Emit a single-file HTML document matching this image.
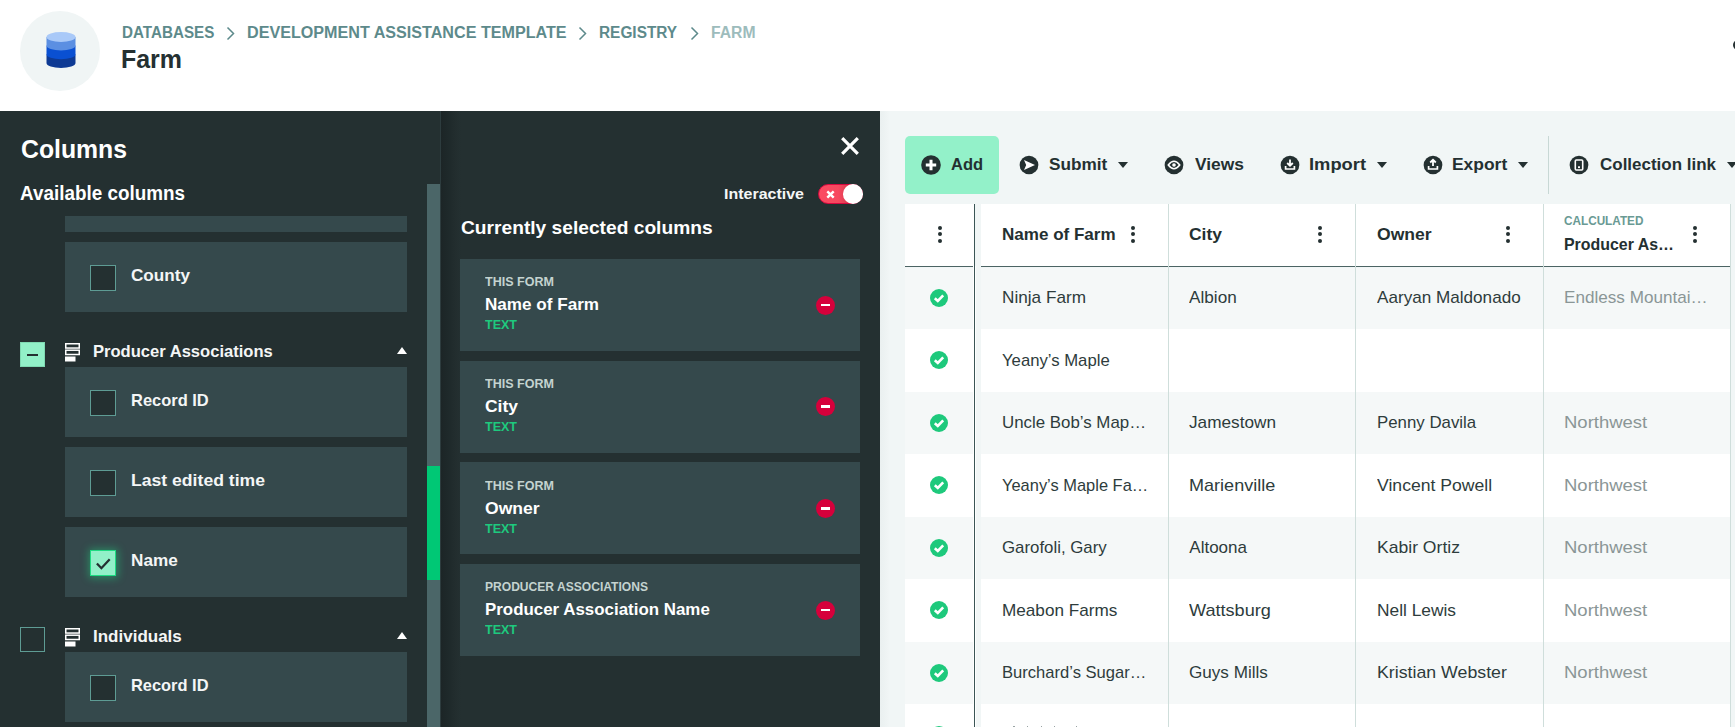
<!DOCTYPE html>
<html><head><meta charset="utf-8">
<style>
*{margin:0;padding:0;box-sizing:border-box}
html,body{width:1735px;height:727px;overflow:hidden;background:#fff;font-family:"Liberation Sans",sans-serif}
.a{position:absolute}
.t{position:absolute;white-space:nowrap;line-height:1;transform-origin:0 50%}
.card{position:absolute;left:65px;width:342px;height:70px;background:#35494c}
.cb{position:absolute;width:26px;height:26px;border:1.2px solid #5e9c94;background:#243031}
.tri{position:absolute;width:0;height:0;border-left:5.5px solid transparent;border-right:5.5px solid transparent;border-bottom:7.5px solid #fff}
.scard{position:absolute;left:460px;width:400px;height:92px;background:#35494c}
.rm{position:absolute;width:19px;height:19px;border-radius:50%;background:#d6003b}
.rm:after{content:"";position:absolute;left:5px;top:8.2px;width:9px;height:2.6px;background:#fff}
.ico{position:absolute;width:19.5px;height:19.5px}
.dd{position:absolute;width:0;height:0;border-left:5px solid transparent;border-right:5px solid transparent;border-top:6px solid #243031}
.dots{position:absolute;width:4px;height:17px}
.dots i{position:absolute;left:0;width:4px;height:4px;border-radius:50%;background:#243031}
.chk{position:absolute;width:18px;height:18px}
.row{position:absolute;height:62.4px}
</style></head><body>

<div class="a" style="left:0;top:0;width:1735px;height:111px;background:#fff"></div>
<div class="a" style="left:20px;top:11px;width:80px;height:80px;border-radius:50%;background:#f0f5f5"></div>
<svg class="a" style="left:45.5px;top:31px" width="30" height="38" viewBox="0 0 30 38">
<path d="M0.5 23.3 L0.5 32 A14.5 5 0 0 0 29.5 32 L29.5 23.3 Z" fill="#0e3a94"/>
<path d="M0.5 14.4 L0.5 23.3 A14.5 5 0 0 0 29.5 23.3 L29.5 14.4 Z" fill="#0a50d2"/>
<path d="M0.5 6 L0.5 14.4 A14.5 5 0 0 0 29.5 14.4 L29.5 6 Z" fill="#5b8fe2"/>
<ellipse cx="15" cy="6" rx="14.5" ry="5" fill="#a9c9f8"/>
</svg>
<div class="t" style="left:122.00px;top:25.18px;font-size:16.8px;color:#5d8a8b;font-weight:bold;transform:scaleX(0.9054);">DATABASES</div>
<div class="t" style="left:246.70px;top:25.18px;font-size:16.8px;color:#5d8a8b;font-weight:bold;transform:scaleX(0.9612);">DEVELOPMENT ASSISTANCE TEMPLATE</div>
<div class="t" style="left:599.30px;top:25.18px;font-size:16.8px;color:#5d8a8b;font-weight:bold;transform:scaleX(0.9172);">REGISTRY</div>
<div class="t" style="left:710.70px;top:25.18px;font-size:16.8px;color:#9dbcbc;font-weight:bold;transform:scaleX(0.9370);">FARM</div>
<svg class="a" style="left:226px;top:26px" width="10" height="15"><path d="M1.5 1.5 L7.5 7.5 L1.5 13.5" stroke="#5d8a8b" stroke-width="1.5" fill="none"/></svg>
<svg class="a" style="left:578px;top:26px" width="10" height="15"><path d="M1.5 1.5 L7.5 7.5 L1.5 13.5" stroke="#5d8a8b" stroke-width="1.5" fill="none"/></svg>
<svg class="a" style="left:690px;top:26px" width="10" height="15"><path d="M1.5 1.5 L7.5 7.5 L1.5 13.5" stroke="#5d8a8b" stroke-width="1.5" fill="none"/></svg>
<div class="t" style="left:121.00px;top:46.54px;font-size:25px;color:#243031;font-weight:bold;transform:scaleX(0.9978);">Farm</div>
<div class="a" style="left:1733px;top:40px;width:10px;height:10px;border-radius:50%;background:#243031"></div>
<div class="a" style="left:0;top:111px;width:441px;height:616px;background:#243031"></div>
<div class="t" style="left:20.80px;top:137.01px;font-size:25.5px;color:#fff;font-weight:bold;transform:scaleX(0.9717);">Columns</div>
<div class="t" style="left:20.00px;top:184.49px;font-size:19.5px;color:#fff;font-weight:bold;transform:scaleX(0.9677);">Available columns</div>
<div class="a" style="left:427px;top:184px;width:13px;height:543px;background:#4b6668"></div>
<div class="a" style="left:427px;top:466px;width:13px;height:114px;background:#00c875"></div>
<div class="a" style="left:440px;top:111px;width:1px;height:616px;background:#2d3c3e"></div>
<div class="card" style="top:216px;height:16px"></div>
<div class="card" style="top:242px"></div>
<div class="cb" style="left:90px;top:265px"></div>
<div class="t" style="left:130.70px;top:266.61px;font-size:17px;color:#f4f6f6;font-weight:bold;transform:scaleX(1.0077);">County</div>
<div class="cb" style="left:20px;top:342px;width:25px;height:25px;background:#92f0c8;border-color:#7fd9b2"></div>
<div class="a" style="left:27px;top:353.5px;width:11px;height:2.2px;background:#243031"></div>
<svg class="a" style="left:65px;top:343px" width="16" height="19" viewBox="0 0 16 19">
<rect x="0.75" y="0.75" width="13.5" height="4.3" fill="none" stroke="#fff" stroke-width="1.5"/>
<rect x="0.75" y="7.2" width="13.5" height="4.3" fill="none" stroke="#fff" stroke-width="1.5"/>
<rect x="0" y="13.5" width="10.5" height="5" fill="#fff"/>
</svg>
<div class="t" style="left:93.40px;top:342.61px;font-size:17px;color:#f4f6f6;font-weight:bold;transform:scaleX(0.9743);">Producer Associations</div>
<div class="tri" style="left:396.5px;top:347px"></div>
<div class="card" style="top:367px"></div>
<div class="cb" style="left:90px;top:390px"></div>
<div class="t" style="left:130.70px;top:391.61px;font-size:17px;color:#f4f6f6;font-weight:bold;transform:scaleX(0.9677);">Record ID</div>
<div class="card" style="top:447px"></div>
<div class="cb" style="left:90px;top:470px"></div>
<div class="t" style="left:130.70px;top:471.61px;font-size:17px;color:#f4f6f6;font-weight:bold;transform:scaleX(1.0354);">Last edited time</div>
<div class="card" style="top:527px"></div>
<div class="cb" style="left:90px;top:550px;background:#92f0c8;border-color:#1edc82;box-shadow:0 0 8px 1.5px rgba(30,220,130,.45)"></div>
<svg class="a" style="left:90px;top:550px" width="26" height="26"><path d="M6.9 13.5 L11.4 18.2 L19.7 9.3" stroke="#243031" stroke-width="2.3" fill="none"/></svg>
<div class="t" style="left:130.70px;top:551.61px;font-size:17px;color:#f4f6f6;font-weight:bold;transform:scaleX(1.0086);">Name</div>
<div class="cb" style="left:20px;top:627px;width:25px;height:25px"></div>
<svg class="a" style="left:65px;top:628px" width="16" height="19" viewBox="0 0 16 19">
<rect x="0.75" y="0.75" width="13.5" height="4.3" fill="none" stroke="#fff" stroke-width="1.5"/>
<rect x="0.75" y="7.2" width="13.5" height="4.3" fill="none" stroke="#fff" stroke-width="1.5"/>
<rect x="0" y="13.5" width="10.5" height="5" fill="#fff"/>
</svg>
<div class="t" style="left:93.40px;top:627.61px;font-size:17px;color:#f4f6f6;font-weight:bold;transform:scaleX(1.0001);">Individuals</div>
<div class="tri" style="left:396.5px;top:632px"></div>
<div class="card" style="top:652px"></div>
<div class="cb" style="left:90px;top:675px"></div>
<div class="t" style="left:130.70px;top:676.61px;font-size:17px;color:#f4f6f6;font-weight:bold;transform:scaleX(0.9652);">Record ID</div>
<div class="a" style="left:441px;top:111px;width:439px;height:616px;background:#243031"></div>
<div class="a" style="left:441px;top:111px;width:20px;height:616px;background:linear-gradient(90deg,#1c2526 0,#1f2a2b 45%,#222d2e 70%,#243031 100%)"></div>
<svg class="a" style="left:840px;top:136px" width="20" height="20"><path d="M2.2 2.2 L17.8 17.8 M17.8 2.2 L2.2 17.8" stroke="#fff" stroke-width="3.2" fill="none"/></svg>
<div class="t" style="left:724.40px;top:186.18px;font-size:15.5px;color:#f4f6f6;font-weight:bold;transform:scaleX(1.0317);">Interactive</div>
<div class="a" style="left:817.5px;top:184px;width:45px;height:20px;border-radius:10px;border:1px solid #d8083f;background:linear-gradient(90deg,#fb4a62 0,#f7485f 45%,#d83a50 70%,#a83040 85%)"></div>
<div class="a" style="left:842.5px;top:184px;width:20.3px;height:20px;border-radius:50%;background:#fff"></div>
<svg class="a" style="left:826px;top:189.5px" width="9" height="9"><path d="M1.3 1.3 L7.7 7.7 M7.7 1.3 L1.3 7.7" stroke="#fff" stroke-width="2.4" fill="none"/></svg>
<div class="t" style="left:460.90px;top:217.72px;font-size:19px;color:#fff;font-weight:bold;transform:scaleX(1.0097);">Currently selected columns</div>
<div class="scard" style="top:259px"></div>
<div class="t" style="left:485.30px;top:276.36px;font-size:12.8px;color:#c4d3d0;font-weight:bold;transform:scaleX(0.9802);">THIS FORM</div>
<div class="t" style="left:485.30px;top:296.21px;font-size:17px;color:#fff;font-weight:bold;transform:scaleX(1.0056);">Name of Farm</div>
<div class="t" style="left:485.30px;top:319.46px;font-size:12.8px;color:#1ec97e;font-weight:bold;transform:scaleX(0.9782);">TEXT</div>
<div class="rm" style="left:816px;top:295.5px"></div>
<div class="scard" style="top:360.7px"></div>
<div class="t" style="left:485.30px;top:378.06px;font-size:12.8px;color:#c4d3d0;font-weight:bold;transform:scaleX(0.9802);">THIS FORM</div>
<div class="t" style="left:485.30px;top:397.91px;font-size:17px;color:#fff;font-weight:bold;transform:scaleX(1.0275);">City</div>
<div class="t" style="left:485.30px;top:421.16px;font-size:12.8px;color:#1ec97e;font-weight:bold;transform:scaleX(0.9782);">TEXT</div>
<div class="rm" style="left:816px;top:397.2px"></div>
<div class="scard" style="top:462.3px"></div>
<div class="t" style="left:485.30px;top:479.66px;font-size:12.8px;color:#c4d3d0;font-weight:bold;transform:scaleX(0.9802);">THIS FORM</div>
<div class="t" style="left:485.30px;top:499.51px;font-size:17px;color:#fff;font-weight:bold;transform:scaleX(1.0321);">Owner</div>
<div class="t" style="left:485.30px;top:522.76px;font-size:12.8px;color:#1ec97e;font-weight:bold;transform:scaleX(0.9782);">TEXT</div>
<div class="rm" style="left:816px;top:498.8px"></div>
<div class="scard" style="top:564px"></div>
<div class="t" style="left:485.30px;top:581.36px;font-size:12.8px;color:#c4d3d0;font-weight:bold;transform:scaleX(0.9432);">PRODUCER ASSOCIATIONS</div>
<div class="t" style="left:485.30px;top:601.21px;font-size:17px;color:#fff;font-weight:bold;transform:scaleX(0.9942);">Producer Association Name</div>
<div class="t" style="left:485.30px;top:624.46px;font-size:12.8px;color:#1ec97e;font-weight:bold;transform:scaleX(0.9782);">TEXT</div>
<div class="rm" style="left:816px;top:600.5px"></div>
<div class="a" style="left:880px;top:111px;width:855px;height:616px;background:#f1f6f6"></div>
<div class="a" style="left:880px;top:111px;width:10px;height:616px;background:linear-gradient(90deg,#eaf0f0,#f1f6f6)"></div>
<div class="a" style="left:905px;top:136px;width:94px;height:58px;border-radius:5px;background:#93f1c9"></div>
<svg class="a" style="left:921px;top:155px" width="20" height="20" viewBox="0 0 20 20"><circle cx="10" cy="10" r="9.8" fill="#243031"/><path d="M10 4.8 V15.2 M4.8 10 H15.2" stroke="#fff" stroke-width="3"/></svg>
<div class="t" style="left:951.30px;top:156.21px;font-size:17px;color:#243031;font-weight:bold;transform:scaleX(0.9683);">Add</div>
<svg class="a" style="left:1019.3px;top:155px" width="20" height="20" viewBox="0 0 20 20"><circle cx="10" cy="10" r="9.35" fill="#243031"/><path d="M5 5 L16 10 L5 15 L7.2 10 Z" fill="#fff"/></svg>
<div class="t" style="left:1049.40px;top:155.91px;font-size:17px;color:#243031;font-weight:bold;transform:scaleX(1.0120);">Submit</div>
<div class="dd" style="left:1118px;top:162px"></div>
<svg class="a" style="left:1164.3px;top:155px" width="20" height="20" viewBox="0 0 20 20"><circle cx="10" cy="10" r="9.35" fill="#243031"/><path d="M4.3 10 Q10 2.6 15.7 10 Q10 17.4 4.3 10 Z" fill="none" stroke="#fff" stroke-width="1.6"/><circle cx="10" cy="10" r="1.8" fill="#fff"/></svg>
<div class="t" style="left:1194.50px;top:155.91px;font-size:17px;color:#243031;font-weight:bold;transform:scaleX(1.0232);">Views</div>
<svg class="a" style="left:1280.3px;top:155px" width="20" height="20" viewBox="0 0 20 20"><circle cx="10" cy="10" r="9.35" fill="#243031"/><path d="M10 4.5 V10.5 M7.2 8 L10 10.8 L12.8 8" stroke="#fff" stroke-width="1.8" fill="none"/><path d="M5.6 10.9 V14 H14.4 V10.9" stroke="#fff" stroke-width="1.7" fill="none"/></svg>
<div class="t" style="left:1309.40px;top:155.91px;font-size:17px;color:#243031;font-weight:bold;transform:scaleX(1.0778);">Import</div>
<div class="dd" style="left:1377px;top:162px"></div>
<svg class="a" style="left:1423.3px;top:155px" width="20" height="20" viewBox="0 0 20 20"><circle cx="10" cy="10" r="9.35" fill="#243031"/><path d="M10 11 V5 M7.2 7.5 L10 4.7 L12.8 7.5" stroke="#fff" stroke-width="1.8" fill="none"/><path d="M5.6 10.9 V14 H14.4 V10.9" stroke="#fff" stroke-width="1.7" fill="none"/></svg>
<div class="t" style="left:1452.30px;top:155.91px;font-size:17px;color:#243031;font-weight:bold;transform:scaleX(1.0252);">Export</div>
<div class="dd" style="left:1518px;top:162px"></div>
<div class="a" style="left:1548px;top:136px;width:1px;height:58px;background:#c8d8d5"></div>
<svg class="a" style="left:1569.3px;top:155px" width="20" height="20" viewBox="0 0 20 20"><circle cx="10" cy="10" r="9.35" fill="#243031"/><rect x="6.3" y="5" width="7.4" height="10" rx="1" fill="none" stroke="#fff" stroke-width="1.6"/><rect x="9" y="11.3" width="2" height="1.8" fill="#fff"/></svg>
<div class="t" style="left:1599.70px;top:155.91px;font-size:17px;color:#243031;font-weight:bold;transform:scaleX(0.9985);">Collection link</div>
<div class="dd" style="left:1727px;top:162px"></div>
<div class="a" style="left:905px;top:204px;width:69px;height:62.5px;background:#fff"></div>
<div class="a" style="left:981px;top:204px;width:749.5px;height:62.5px;background:#fff"></div>
<div class="a" style="left:905px;top:266px;width:69px;height:1.2px;background:#4c6464"></div>
<div class="a" style="left:981px;top:266px;width:749.5px;height:1.2px;background:#4c6464"></div>
<div class="a" style="left:905px;top:268.00px;width:68px;height:61.00px;background:#f5f8f8"></div>
<div class="a" style="left:981px;top:268.00px;width:749px;height:61.00px;background:#f5f8f8"></div>
<svg class="chk" style="left:930px;top:288.70px" viewBox="0 0 18 18"><circle cx="9" cy="9" r="9" fill="#1ec97c"/><path d="M4.8 9.2 L7.8 12 L13.2 6.4" stroke="#fff" stroke-width="2.6" fill="none"/></svg>
<div class="t" style="left:1002.20px;top:289.11px;font-size:17px;color:#2e3c3c;transform:scaleX(1.0100);">Ninja Farm</div>
<div class="t" style="left:1189.30px;top:289.11px;font-size:17px;color:#2e3c3c;transform:scaleX(1.0100);">Albion</div>
<div class="t" style="left:1377.00px;top:289.11px;font-size:17px;color:#2e3c3c;transform:scaleX(1.0070);">Aaryan Maldonado</div>
<div class="t" style="left:1564.30px;top:289.11px;font-size:17px;color:#8a9696;transform:scaleX(1.0070);">Endless Mountai…</div>
<div class="a" style="left:905px;top:329.00px;width:68px;height:62.50px;background:#fff"></div>
<div class="a" style="left:981px;top:329.00px;width:749px;height:62.50px;background:#fff"></div>
<svg class="chk" style="left:930px;top:351.20px" viewBox="0 0 18 18"><circle cx="9" cy="9" r="9" fill="#1ec97c"/><path d="M4.8 9.2 L7.8 12 L13.2 6.4" stroke="#fff" stroke-width="2.6" fill="none"/></svg>
<div class="t" style="left:1002.20px;top:351.61px;font-size:17px;color:#2e3c3c;transform:scaleX(0.9820);">Yeany’s Maple</div>
<div class="a" style="left:905px;top:391.50px;width:68px;height:62.50px;background:#f5f8f8"></div>
<div class="a" style="left:981px;top:391.50px;width:749px;height:62.50px;background:#f5f8f8"></div>
<svg class="chk" style="left:930px;top:413.70px" viewBox="0 0 18 18"><circle cx="9" cy="9" r="9" fill="#1ec97c"/><path d="M4.8 9.2 L7.8 12 L13.2 6.4" stroke="#fff" stroke-width="2.6" fill="none"/></svg>
<div class="t" style="left:1002.20px;top:414.11px;font-size:17px;color:#2e3c3c;transform:scaleX(0.9920);">Uncle Bob’s Map…</div>
<div class="t" style="left:1189.30px;top:414.11px;font-size:17px;color:#2e3c3c;transform:scaleX(1.0120);">Jamestown</div>
<div class="t" style="left:1377.00px;top:414.11px;font-size:17px;color:#2e3c3c;transform:scaleX(0.9900);">Penny Davila</div>
<div class="t" style="left:1564.30px;top:414.11px;font-size:17px;color:#8a9696;transform:scaleX(1.0880);">Northwest</div>
<div class="a" style="left:905px;top:454.00px;width:68px;height:62.50px;background:#fff"></div>
<div class="a" style="left:981px;top:454.00px;width:749px;height:62.50px;background:#fff"></div>
<svg class="chk" style="left:930px;top:476.20px" viewBox="0 0 18 18"><circle cx="9" cy="9" r="9" fill="#1ec97c"/><path d="M4.8 9.2 L7.8 12 L13.2 6.4" stroke="#fff" stroke-width="2.6" fill="none"/></svg>
<div class="t" style="left:1002.20px;top:476.61px;font-size:17px;color:#2e3c3c;transform:scaleX(0.9670);">Yeany’s Maple Fa…</div>
<div class="t" style="left:1189.30px;top:476.61px;font-size:17px;color:#2e3c3c;transform:scaleX(1.0620);">Marienville</div>
<div class="t" style="left:1377.00px;top:476.61px;font-size:17px;color:#2e3c3c;transform:scaleX(1.0360);">Vincent Powell</div>
<div class="t" style="left:1564.30px;top:476.61px;font-size:17px;color:#8a9696;transform:scaleX(1.0880);">Northwest</div>
<div class="a" style="left:905px;top:516.50px;width:68px;height:62.50px;background:#f5f8f8"></div>
<div class="a" style="left:981px;top:516.50px;width:749px;height:62.50px;background:#f5f8f8"></div>
<svg class="chk" style="left:930px;top:538.70px" viewBox="0 0 18 18"><circle cx="9" cy="9" r="9" fill="#1ec97c"/><path d="M4.8 9.2 L7.8 12 L13.2 6.4" stroke="#fff" stroke-width="2.6" fill="none"/></svg>
<div class="t" style="left:1002.20px;top:539.11px;font-size:17px;color:#2e3c3c;transform:scaleX(0.9900);">Garofoli, Gary</div>
<div class="t" style="left:1189.30px;top:539.11px;font-size:17px;color:#2e3c3c;">Altoona</div>
<div class="t" style="left:1377.00px;top:539.11px;font-size:17px;color:#2e3c3c;transform:scaleX(1.0330);">Kabir Ortiz</div>
<div class="t" style="left:1564.30px;top:539.11px;font-size:17px;color:#8a9696;transform:scaleX(1.0880);">Northwest</div>
<div class="a" style="left:905px;top:579.00px;width:68px;height:62.50px;background:#fff"></div>
<div class="a" style="left:981px;top:579.00px;width:749px;height:62.50px;background:#fff"></div>
<svg class="chk" style="left:930px;top:601.20px" viewBox="0 0 18 18"><circle cx="9" cy="9" r="9" fill="#1ec97c"/><path d="M4.8 9.2 L7.8 12 L13.2 6.4" stroke="#fff" stroke-width="2.6" fill="none"/></svg>
<div class="t" style="left:1002.20px;top:601.61px;font-size:17px;color:#2e3c3c;transform:scaleX(1.0090);">Meabon Farms</div>
<div class="t" style="left:1189.30px;top:601.61px;font-size:17px;color:#2e3c3c;transform:scaleX(1.0650);">Wattsburg</div>
<div class="t" style="left:1377.00px;top:601.61px;font-size:17px;color:#2e3c3c;transform:scaleX(1.0200);">Nell Lewis</div>
<div class="t" style="left:1564.30px;top:601.61px;font-size:17px;color:#8a9696;transform:scaleX(1.0880);">Northwest</div>
<div class="a" style="left:905px;top:641.50px;width:68px;height:62.50px;background:#f5f8f8"></div>
<div class="a" style="left:981px;top:641.50px;width:749px;height:62.50px;background:#f5f8f8"></div>
<svg class="chk" style="left:930px;top:663.70px" viewBox="0 0 18 18"><circle cx="9" cy="9" r="9" fill="#1ec97c"/><path d="M4.8 9.2 L7.8 12 L13.2 6.4" stroke="#fff" stroke-width="2.6" fill="none"/></svg>
<div class="t" style="left:1002.20px;top:664.11px;font-size:17px;color:#2e3c3c;transform:scaleX(0.9750);">Burchard’s Sugar…</div>
<div class="t" style="left:1189.30px;top:664.11px;font-size:17px;color:#2e3c3c;transform:scaleX(1.0060);">Guys Mills</div>
<div class="t" style="left:1377.00px;top:664.11px;font-size:17px;color:#2e3c3c;transform:scaleX(1.0440);">Kristian Webster</div>
<div class="t" style="left:1564.30px;top:664.11px;font-size:17px;color:#8a9696;transform:scaleX(1.0880);">Northwest</div>
<div class="a" style="left:905px;top:704.00px;width:68px;height:62.50px;background:#fff"></div>
<div class="a" style="left:981px;top:704.00px;width:749px;height:62.50px;background:#fff"></div>
<svg class="chk" style="left:930px;top:726.20px" viewBox="0 0 18 18"><circle cx="9" cy="9" r="9" fill="#1ec97c"/><path d="M4.8 9.2 L7.8 12 L13.2 6.4" stroke="#fff" stroke-width="2.6" fill="none"/></svg>
<div class="a" style="left:1013px;top:725.5px;width:1.5px;height:2px;background:#9aa4a4"></div>
<div class="a" style="left:1026.5px;top:725.5px;width:1.5px;height:2px;background:#9aa4a4"></div>
<div class="a" style="left:1040.7px;top:725.5px;width:1.5px;height:2px;background:#9aa4a4"></div>
<div class="a" style="left:1053.6px;top:725.5px;width:1.5px;height:2px;background:#9aa4a4"></div>
<div class="a" style="left:1075.6px;top:725.5px;width:1.5px;height:2px;background:#9aa4a4"></div>
<div class="a" style="left:973px;top:266px;width:3px;height:461px;background:#fff"></div>
<div class="a" style="left:974px;top:204px;width:1.2px;height:523px;background:#3b5555"></div>
<div class="a" style="left:1168px;top:204px;width:1px;height:523px;background:#cfdedb"></div>
<div class="a" style="left:1355px;top:204px;width:1px;height:523px;background:#cfdedb"></div>
<div class="a" style="left:1543px;top:204px;width:1px;height:523px;background:#cfdedb"></div>
<div class="a" style="left:1730px;top:204px;width:1px;height:523px;background:#cfdedb"></div>
<div class="t" style="left:1001.90px;top:225.71px;font-size:17px;color:#243031;font-weight:bold;transform:scaleX(1.0021);">Name of Farm</div>
<div class="t" style="left:1189.20px;top:225.71px;font-size:17px;color:#243031;font-weight:bold;transform:scaleX(1.0275);">City</div>
<div class="t" style="left:1377.00px;top:225.81px;font-size:17px;color:#243031;font-weight:bold;transform:scaleX(1.0321);">Owner</div>
<div class="t" style="left:1564.40px;top:215.27px;font-size:12.2px;color:#6a9a94;font-weight:bold;transform:scaleX(0.9642);">CALCULATED</div>
<div class="t" style="left:1564.40px;top:236.21px;font-size:17px;color:#243031;font-weight:bold;transform:scaleX(0.9365);">Producer As…</div>
<div class="dots" style="left:938.2px;top:225.8px"><i style="top:0"></i><i style="top:6.5px"></i><i style="top:13px"></i></div>
<div class="dots" style="left:1131.2px;top:225.8px"><i style="top:0"></i><i style="top:6.5px"></i><i style="top:13px"></i></div>
<div class="dots" style="left:1318.1px;top:225.8px"><i style="top:0"></i><i style="top:6.5px"></i><i style="top:13px"></i></div>
<div class="dots" style="left:1506.2px;top:225.8px"><i style="top:0"></i><i style="top:6.5px"></i><i style="top:13px"></i></div>
<div class="dots" style="left:1692.9px;top:225.8px"><i style="top:0"></i><i style="top:6.5px"></i><i style="top:13px"></i></div>
</body></html>
